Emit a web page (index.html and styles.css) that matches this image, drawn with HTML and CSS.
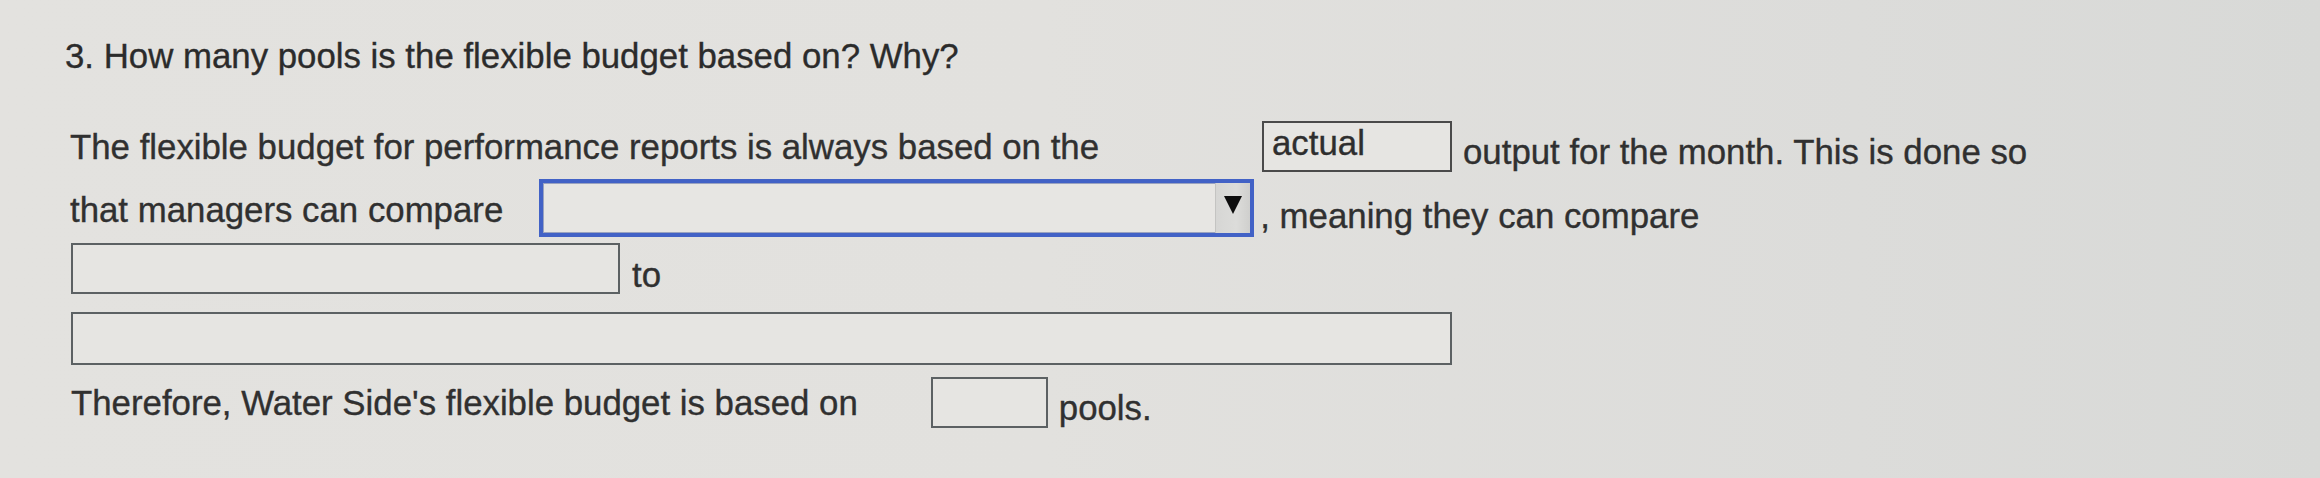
FILE: index.html
```html
<!DOCTYPE html>
<html>
<head>
<meta charset="utf-8">
<link rel="stylesheet" href="styles.css">
</head>
<body>
<div class="page">
  <div class="title">3. How many pools is the flexible budget based on? Why?</div>
  <div class="row r2">
    <span class="txt">The flexible budget for performance reports is always based on the</span>
    <span class="box actual">actual</span>
    <span class="txt after">output for the month. This is done so</span>
  </div>
  <div class="row r3">
    <span class="txt">that managers can compare</span>
    <span class="select"><span class="sel-btn"><span class="tri"></span></span></span>
    <span class="txt comma">, meaning they can compare</span>
  </div>
  <div class="row r4">
    <span class="box in1"></span>
    <span class="txt after2">to</span>
  </div>
  <div class="row r5">
    <span class="box in2"></span>
  </div>
  <div class="row r6">
    <span class="txt">Therefore, Water Side's flexible budget is based on</span>
    <span class="box in3"></span>
    <span class="txt after">pools.</span>
  </div>
</div>
</body>
</html>
```

FILE: styles.css
```css
html, body {
  margin: 0;
  padding: 0;
}
body {
  width: 2320px;
  height: 478px;
  overflow: hidden;
  background: linear-gradient(90deg, #e3e2df 0%, #e2e1de 45%, #dcdcda 80%, #d8d9d7 100%);
  font-family: "Liberation Sans", Arial, sans-serif;
  color: #303030;
  -webkit-text-stroke: 0.35px #303030;
}
.page {
  display: flex;
  flex-direction: column;
  padding-left: 70px;
  padding-top: 35px;
}
.title {
  font-size: 34.8px;
  line-height: 42px;
  color: #2b2b2b;
  margin-left: -5px;
  height: 42px;
}
.row {
  display: flex;
  align-items: center;
  font-size: 34.8px;
}
.txt {
  white-space: nowrap;
  line-height: 40px;
}
.box {
  box-sizing: border-box;
  border: 2px solid #5c6163;
  background: #e6e5e2;
  display: block;
}
.r2 {
  margin-top: 44px;
  height: 51px;
}
.actual {
  width: 190px;
  height: 51px;
  margin-left: 163px;
  border-color: #4a4a4a;
  padding-left: 8px;
  line-height: 40px;
  color: #2e2e2e;
}
.after {
  margin-left: 11px;
  position: relative;
  top: 5px;
}
.r3 {
  margin-top: 7px;
  height: 58px;
}
.r3 .txt:first-child {
  position: relative;
  top: 2px;
}
.select {
  box-sizing: border-box;
  width: 715px;
  height: 58px;
  margin-left: 36px;
  border: 4px solid #4262c6;
  background: #e7e6e3;
  display: flex;
  justify-content: flex-end;
  box-shadow: inset 0 0 0 1px #9aa3c0;
}
.sel-btn {
  width: 34px;
  height: 100%;
  background: linear-gradient(90deg, #d6d6d4, #dcdcda 60%, #cfcfcd);
  border-left: 1px solid #c4c4c2;
  display: flex;
  align-items: center;
  justify-content: center;
}
.tri {
  width: 0;
  height: 0;
  border-left: 9px solid transparent;
  border-right: 9px solid transparent;
  border-top: 18px solid #0d0d0d;
  margin-top: -6px;
}
.comma {
  margin-left: 6px;
  position: relative;
  top: 8px;
}
.r4 {
  margin-top: 6px;
  height: 51px;
}
.in1 {
  width: 549px;
  height: 51px;
  margin-left: 1px;
}
.after2 {
  margin-left: 12px;
  position: relative;
  top: 6px;
}
.r5 {
  margin-top: 18px;
  height: 53px;
}
.in2 {
  width: 1381px;
  height: 53px;
  margin-left: 1px;
}
.r6 {
  margin-top: 12px;
  height: 51px;
}
.r6 .txt:first-child {
  margin-left: 1px;
}
.in3 {
  width: 117px;
  height: 51px;
  margin-left: 73px;
}
```
